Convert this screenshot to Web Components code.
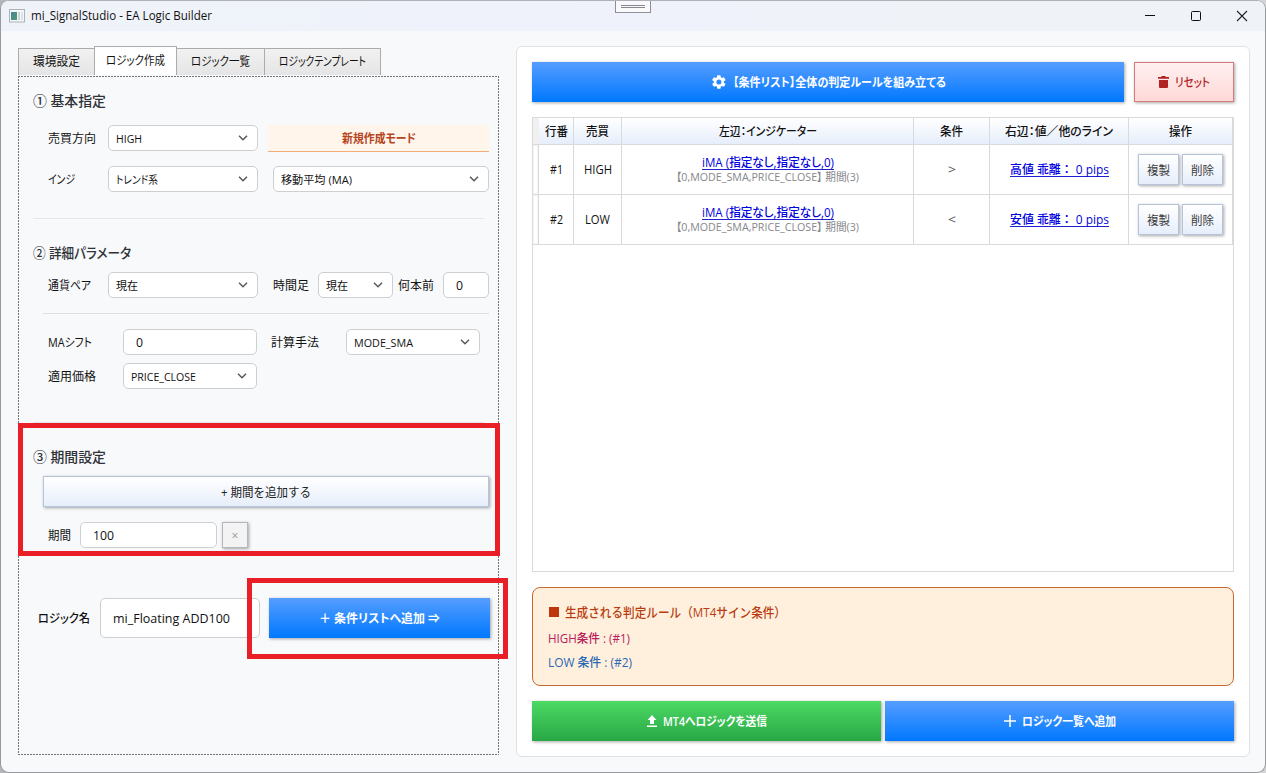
<!DOCTYPE html>
<html lang="ja">
<head>
<meta charset="utf-8">
<title>mi_SignalStudio - EA Logic Builder</title>
<style>
  html, body { margin: 0; height: 100%; }
  body {
    background: linear-gradient(90deg, #b4b5b9, #c3c3c7 60%, #d4d4d6);
    font-family: "Open Sans", "Noto Sans CJK JP", sans-serif;
    font-size: 12px;
    color: #111;
    overflow: hidden;
  }
</style>
</head>
<body>
<app-window></app-window>

<script>
const define = (name, html, setup) => {
  const template = document.createElement("template");
  template.innerHTML = html;
  customElements.define(name, class extends HTMLElement {
    constructor() {
      super();
      this.attachShadow({ mode: "open" });
      this.shadowRoot.append(template.content.cloneNode(true));
    }
    connectedCallback() {
      if (setup) setup(this, this.shadowRoot);
    }
  });
};

define("app-window", `
<style>
  :host {
    display: flex;
    flex-direction: column;
    box-sizing: border-box;
    position: relative;
    width: 1266px;
    height: 773px;
    border: 1px solid #98999c;
    border-top-color: #b0b1b6;
    border-radius: 9px;
    background: #f8f9fb;
    overflow: hidden;
  }
  main { display: flex; flex: 1; align-items: flex-start; padding: 15px 15px 0 17px; }
  logic-form { margin-right: 17px; }
</style>
<title-bar></title-bar>
<main>
  <logic-form></logic-form>
  <rule-panel></rule-panel>
</main>
<mark-box style="left:17px;top:422px;width:482px;height:133px"></mark-box>
<mark-box style="left:246px;top:577px;width:261px;height:81px"></mark-box>
`);

define("title-bar", `
<style>
  :host {
    display: flex;
    align-items: center;
    flex: none;
    height: 30px;
    box-sizing: border-box;
    padding: 0 17px 0 8px;
    background: linear-gradient(90deg, #eff3f9, #eff2fb 50%, #eff2f6 80%, #eff3f8);
  }
  .app { margin-right: 6px; }
  .controls { display: flex; gap: 34px; margin-left: auto; }
  .grip {
    position: absolute;
    left: 614px;
    top: -2px;
    width: 34px;
    height: 12px;
    border: 1px solid #909094;
    background: #faf9fb;
  }
  .grip::before {
    content: "";
    display: block;
    height: 1px;
    margin: 5px 5px 0;
    border: solid #88888c;
    border-width: 1px 0;
  }
</style>
<svg class="app" width="16" height="14" viewBox="0 0 16 14">
  <defs><linearGradient id="g" x2="1" y2="1"><stop stop-color="#4b8299"/><stop offset="1" stop-color="#4d9b73"/></linearGradient></defs>
  <rect x=".5" y=".5" width="15" height="12.5" fill="#f3f5f6" stroke="#a9b3b8"/>
  <rect x="2" y="3" width="6" height="8" fill="url(#g)"/>
  <rect x="9" y="3" width="2" height="8" fill="#c8d3d6"/>
  <rect x="12" y="3" width="2" height="8" fill="#dee4e6"/>
</svg>
<ui-text w="181">mi_SignalStudio - EA Logic Builder</ui-text>
<div class="controls">
  <svg width="12" height="12"><path d="M1 5.5h10" stroke="#111"/></svg>
  <svg width="12" height="12"><rect x="1.5" y="1.5" width="9" height="9" rx="1" fill="none" stroke="#111"/></svg>
  <svg width="12" height="12"><path d="M1 1l10 10M11 1L1 11" stroke="#222" stroke-width="1.1"/></svg>
</div>
<div class="grip"></div>
`);

define("logic-form", `
<style>
  :host { display: block; width: 481px; flex: none; }
  nav { display: flex; align-items: flex-end; height: 29px; }
  /* 2px dashes with a 1px gap on all four sides */
  .panel {
    --x: repeating-linear-gradient(90deg, #6f7478 0 2px, transparent 2px 3px);
    --y: repeating-linear-gradient(#6f7478 0 2px, transparent 2px 3px);
    background:
      var(--x) top / 100% 1px no-repeat,
      var(--x) bottom / 100% 1px no-repeat,
      var(--y) left / 1px 100% no-repeat,
      var(--y) right / 1px 100% no-repeat;
    margin-top: 1px;
    height: 679px;
    box-sizing: border-box;
    padding: 14px 10px 0 15px;
  }
  .row { display: flex; align-items: center; height: 26px; padding-left: 15px; }
  .row ui-label { width: 60px; }
  hr { border: 0; height: 1px; margin: 0; background: #e4e7ea; }
  .mode {
    display: flex;
    align-items: center;
    justify-content: center;
    width: 221px;
    height: 27px;
    box-sizing: border-box;
    margin-left: 10px;
    padding-top: 2px;
    border-bottom: 1px solid #f2ae78;
    background: #fff5eb;
    color: #b5431b;
    font-weight: 600;
  }
</style>
<nav>
  <tab-item style="width:76px"><ui-text w="47">環境設定</ui-text></tab-item>
  <tab-item selected style="width:83px"><ui-text w="59">ロジック作成</ui-text></tab-item>
  <tab-item plain-edge style="width:87px"><ui-text w="59">ロジック一覧</ui-text></tab-item>
  <tab-item last style="width:117px"><ui-text w="87">ロジックテンプレート</ui-text></tab-item>
</nav>
<div class="panel">
  <group-heading><ui-text w="73">① 基本指定</ui-text></group-heading>
  <div class="row" style="margin-top:15px">
    <ui-label><ui-text w="48">売買方向</ui-text></ui-label>
    <ui-select style="width:150px"><ui-text w="26">HIGH</ui-text></ui-select>
    <div class="mode"><ui-text w="74">新規作成モード</ui-text></div>
  </div>
  <div class="row" style="margin-top:15px">
    <ui-label><ui-text w="27">インジ</ui-text></ui-label>
    <ui-select style="width:150px"><ui-text w="42">トレンド系</ui-text></ui-select>
    <ui-select style="width:216px;margin-left:15px"><ui-text w="71">移動平均 (MA)</ui-text></ui-select>
  </div>
  <hr style="margin:26px 5px 0 0">
  <group-heading style="margin-top:23px"><ui-text w="98">② 詳細パラメータ</ui-text></group-heading>
  <div class="row" style="margin-top:10px">
    <ui-label><ui-text w="43">通貨ペア</ui-text></ui-label>
    <ui-select style="width:150px"><ui-text w="22">現在</ui-text></ui-select>
    <ui-label style="width:45px;margin-left:15px"><ui-text w="36">時間足</ui-text></ui-label>
    <ui-select style="width:75px"><ui-text w="22">現在</ui-text></ui-select>
    <ui-label style="width:45px;margin-left:5px"><ui-text w="36">何本前</ui-text></ui-label>
    <ui-input style="width:46px"><ui-text w="7">0</ui-text></ui-input>
  </div>
  <hr style="margin:15px 0 0 10px;background:#dadde1">
  <div class="row" style="margin-top:15px">
    <ui-label style="width:75px"><ui-text w="44">MAシフト</ui-text></ui-label>
    <ui-input style="width:134px"><ui-text w="7">0</ui-text></ui-input>
    <ui-label style="width:75px;margin-left:14px"><ui-text w="48">計算手法</ui-text></ui-label>
    <ui-select style="width:134px"><ui-text w="59">MODE_SMA</ui-text></ui-select>
  </div>
  <div class="row" style="margin-top:8px">
    <ui-label style="width:75px"><ui-text w="48">適用価格</ui-text></ui-label>
    <ui-select style="width:134px"><ui-text w="65">PRICE_CLOSE</ui-text></ui-select>
  </div>
  <hr style="margin:33px 5px 0 0">
  <group-heading style="margin-top:23px"><ui-text w="73">③ 期間設定</ui-text></group-heading>
  <ui-button kind="plain" style="height:31px;margin:10px 0 0 10px"><ui-text w="90" wide>+ 期間を追加する</ui-text></ui-button>
  <div class="row" style="margin-top:15px">
    <ui-label style="width:32px"><ui-text w="23">期間</ui-text></ui-label>
    <ui-input style="width:137px"><ui-text w="21">100</ui-text></ui-input>
    <ui-button kind="muted" style="width:26px;height:26px;margin-left:5px">×</ui-button>
  </div>
  <div class="row" style="height:40px;margin-top:50px;padding-left:5px">
    <ui-label style="width:62px"><ui-text w="52" style="font-weight:500">ロジック名</ui-text></ui-label>
    <ui-input style="width:160px;height:40px"><ui-text w="117">mi_Floating ADD100</ui-text></ui-input>
    <ui-button kind="blue" style="width:221px;margin-left:9px"><ui-text w="121">＋ 条件リストへ追加 ⇒</ui-text></ui-button>
  </div>
</div>
`);

define("tab-item", `
<style>
  :host {
    display: flex;
    align-items: center;
    justify-content: center;
    box-sizing: border-box;
    height: 27px;
    border: 1px solid #acacac;
    border-width: 1px 0 0 1px;
    background: linear-gradient(#f1f1f1, #e5e5e5);
  }
  :host([selected]) { height: 29px; border-right-width: 1px; background: #fff; }
  :host([plain-edge]) { border-left-width: 0; }
  :host([last]) { border-right-width: 1px; }
</style>
<slot></slot>
`);

define("group-heading", `
<style>
  :host { display: flex; align-items: center; height: 20px; font-size: 14px; font-weight: 500; color: #2f3338; }
  ::slotted(ui-text) { padding-top: 1px; }
</style>
<slot></slot>
`);

define("ui-label", `
<style>
  :host { display: flex; align-items: center; flex: none; }
  ::slotted(ui-text) { padding-top: 2px; }
</style>
<slot></slot>
`);

define("ui-select", `
<style>
  :host {
    display: flex;
    align-items: center;
    justify-content: space-between;
    flex: none;
    box-sizing: border-box;
    height: 26px;
    padding: 2px 9px 0 7px;
    border: 1px solid #cdcfd2;
    border-radius: 5px;
    background: #fff;
    font-size: 11px;
  }
  svg { margin-top: -2px; }
</style>
<slot></slot>
<svg width="10" height="6" viewBox="0 0 10 6"><path d="M1 .8l4 4 4-4" fill="none" stroke="#555a5e" stroke-width="1.5"/></svg>
`);

define("ui-input", `
<style>
  :host {
    display: flex;
    align-items: center;
    flex: none;
    box-sizing: border-box;
    height: 26px;
    padding: 2px 12px 0;
    border: 1px solid #cdcfd2;
    border-radius: 5px;
    background: #fff;
    font-size: 12.5px;
  }
</style>
<slot></slot>
`);

define("ui-button", `
<style>
  :host {
    display: flex;
    align-items: center;
    justify-content: center;
    flex: none;
    gap: 6px;
    box-sizing: border-box;
    height: 40px;
    box-shadow: 1px 1px 3px rgba(0, 0, 0, .35);
  }
  :host([kind=blue]) { background: linear-gradient(#569dff, #0078ff); color: #fff; font-weight: 600; }
  :host([kind=green]) { background: linear-gradient(#4cd964, #28a745); color: #fff; font-weight: 600; }
  :host([kind=danger]) { background: linear-gradient(#fff0f0, #ffd8d8); color: #b22222; border: 1px solid #d8797c; font-weight: 500; }
  :host([kind=plain]) { background: linear-gradient(#fff, #e6eefb); color: #222; border: 1px solid #b5c4db; }
  :host([kind=muted]) { background: #f3f3f3; color: #969696; border: 1px solid #b5b7ba; }
  ::slotted(ui-text) { padding-top: 2px; }
</style>
<slot></slot>
`);

define("rule-panel", `
<style>
  :host {
    display: flex;
    flex-direction: column;
    flex: none;
    box-sizing: border-box;
    width: 734px;
    height: 711px;
    padding: 15px;
    border: 1px solid #dee1e5;
    border-radius: 6px;
    background: #fff;
  }
  .bar { display: flex; }
  .summary {
    box-sizing: border-box;
    height: 99px;
    margin: 15px 0;
    padding: 15px;
    border: 1px solid #c8682f;
    border-radius: 8px;
    background: #fff0de;
    font-weight: 500;
  }
  .summary div { display: flex; align-items: center; height: 24px; }
  .summary .title { height: 18px; margin-bottom: 6px; font-size: 13px; color: #b93c0f; }
  .square { width: 10px; height: 10px; margin: 0 6px 0 1px; background: #bf360c; }
  .high { color: #b8205c; }
  .low { color: #2b67b2; }
</style>
<div class="bar">
  <ui-button kind="blue" style="width:592px">
    <svg width="16" height="16" viewBox="0 0 24 24" fill="#fff"><path d="M19.4 13a7.8 7.8 0 0 0 0-2l2.2-1.7a.5.5 0 0 0 .1-.6l-2.1-3.6a.5.5 0 0 0-.6-.2l-2.6 1a7.6 7.6 0 0 0-1.7-1L14.3 2.2a.5.5 0 0 0-.5-.4h-4a.5.5 0 0 0-.5.4l-.4 2.7a7.6 7.6 0 0 0-1.7 1l-2.6-1a.5.5 0 0 0-.6.2L1.9 8.7a.5.5 0 0 0 .1.6L4.2 11a7.8 7.8 0 0 0 0 2L2 14.7a.5.5 0 0 0-.1.6L4 18.9c.1.2.4.3.6.2l2.6-1c.5.4 1.1.7 1.7 1l.4 2.7c0 .2.2.4.5.4h4c.3 0 .5-.2.5-.4l.4-2.7c.6-.3 1.2-.6 1.7-1l2.6 1c.2.1.5 0 .6-.2l2.1-3.6a.5.5 0 0 0-.1-.6zM11.8 15.8a3.8 3.8 0 1 1 0-7.6 3.8 3.8 0 0 1 0 7.6z" fill-rule="evenodd"/></svg>
    <ui-text w="213">【条件リスト】全体の判定ルールを組み立てる</ui-text>
  </ui-button>
  <ui-button kind="danger" style="width:100px;margin-left:10px">
    <svg width="11" height="12" viewBox="0 0 11 12" fill="#b22222"><path d="M0 1h3l1-1h3l1 1h3v1.7H0zM1 4h9v7a1 1 0 0 1-1 1H2a1 1 0 0 1-1-1z"/></svg>
    <ui-text w="35">リセット</ui-text>
  </ui-button>
</div>
<rule-table></rule-table>
<div class="summary">
  <div class="title"><span class="square"></span><ui-text w="221" wide>生成される判定ルール（MT4サイン条件）</ui-text></div>
  <div class="high"><ui-text w="82">HIGH条件 : (#1)</ui-text></div>
  <div class="low"><ui-text w="84">LOW 条件 : (#2)</ui-text></div>
</div>
<div class="bar" style="gap:4px">
  <ui-button kind="green" style="width:349px">
    <svg width="10" height="12" viewBox="0 0 10 12" fill="#fff"><path d="M5 0l4.5 5H7v4H3V5H.5zM0 10.5h10V12H0z"/></svg>
    <ui-text w="104">MT4へロジックを送信</ui-text>
  </ui-button>
  <ui-button kind="blue" style="width:349px">
    <svg width="12" height="12" viewBox="0 0 12 12"><path d="M6 0v12M0 6h12" stroke="#fff" stroke-width="1.5"/></svg>
    <ui-text w="94">ロジック一覧へ追加</ui-text>
  </ui-button>
</div>
`);

define("rule-table", `
<style>
  :host {
    display: block;
    box-sizing: border-box;
    width: 702px;
    height: 455px;
    margin-top: 15px;
    border: 1px solid #d9dadd;
  }
  .head, rule-row { display: grid; grid-template-columns: 6px 35px 48px 292px 76px 139px 104px; }
  .head { height: 27px; width: 700px; box-sizing: border-box; background: linear-gradient(#fff, #e6eefb); border-bottom: 1px solid #d9dadd; font-weight: 500; }
  .head > * { display: flex; align-items: center; justify-content: center; border-right: 1px solid #d9dadd; }
  .head > :first-child { background: #f0f0f0; border-right: 0; }
  .head ui-text { padding-top: 1px; }
</style>
<div class="head">
  <span></span>
  <span><ui-text w="23">行番</ui-text></span>
  <span><ui-text w="23">売買</ui-text></span>
  <span><ui-text w="98">左辺：インジケーター</ui-text></span>
  <span><ui-text w="23">条件</ui-text></span>
  <span><ui-text w="108">右辺：値／他のライン</ui-text></span>
  <span><ui-text w="23">操作</ui-text></span>
</div>
<rule-row no="#1" side="HIGH" op="&gt;" target="高値 乖離： 0 pips"></rule-row>
<rule-row no="#2" side="LOW" op="&lt;" target="安値 乖離： 0 pips"></rule-row>
`);

define("rule-row", `
<style>
  :host { height: 50px; width: 700px; box-sizing: border-box; border-bottom: 1px solid #d9dadd; }
  .cell {
    display: flex;
    align-items: center;
    justify-content: center;
    border-right: 1px solid #d9dadd;
  }
  .grip { box-shadow: inset 0 0 2px #ddd; }
  .left { flex-direction: column; padding-top: 1px; }
  .link { color: #0000e0; border-bottom: 1px solid #2020d0; line-height: 0; font-weight: 500; }
  .link ui-text { line-height: 13px; }
  .detail { color: #85878a; font-size: 11px; line-height: 0; }
  .detail ui-text { line-height: 14px; }
  .cell ui-button { width: 41px; height: 31px; color: #3c3c3c; }
  .op { color: #555; }
  .actions { gap: 3px; }
</style>
<span class="cell grip"></span>
<span class="cell"><ui-text w="13" id="no"></ui-text></span>
<span class="cell"><ui-text id="side"></ui-text></span>
<span class="cell left">
  <span class="link"><ui-text w="132">iMA (指定なし,指定なし,0)</ui-text></span>
  <span class="detail"><ui-text w="183">【0,MODE_SMA,PRICE_CLOSE】 期間(3)</ui-text></span>
</span>
<span class="cell op"><ui-text w="8" id="op"></ui-text></span>
<span class="cell"><span class="link"><ui-text w="99" id="target" wide></ui-text></span></span>
<span class="cell actions">
  <ui-button kind="plain"><ui-text w="23">複製</ui-text></ui-button>
  <ui-button kind="plain"><ui-text w="23">削除</ui-text></ui-button>
</span>
`, (host, root) => {
  for (const key of ["no", "side", "op", "target"])
    root.getElementById(key).textContent = host.getAttribute(key);
  root.getElementById("side").setAttribute("w", host.getAttribute("side") === "LOW" ? "25" : "28");
});

define("mark-box", `
<style>
  :host { display: block; position: absolute; box-sizing: border-box; border: 5px solid #e81f26; pointer-events: none; }
</style>
`);

// One line of text, condensed horizontally to the width in "w".
// Kana are set proportionally unless "wide" is present.
// Defined last, so that it measures with every parent's font in place.
define("ui-text", `
<style>
  :host { display: inline-block; flex: none; white-space: nowrap; line-height: 18px; }
  span { display: inline-block; transform-origin: 0 50%; font-feature-settings: "palt"; }
  :host([wide]) span { font-feature-settings: normal; }
</style>
<span><slot></slot></span>
`, (host, root) => {
  const width = Number(host.getAttribute("w"));
  const span = root.querySelector("span");
  const natural = span.getBoundingClientRect().width;
  if (!width || !natural) return;
  host.style.width = width + "px";
  span.style.transform = `scaleX(${width / natural})`;
});
</script>
</body>
</html>
